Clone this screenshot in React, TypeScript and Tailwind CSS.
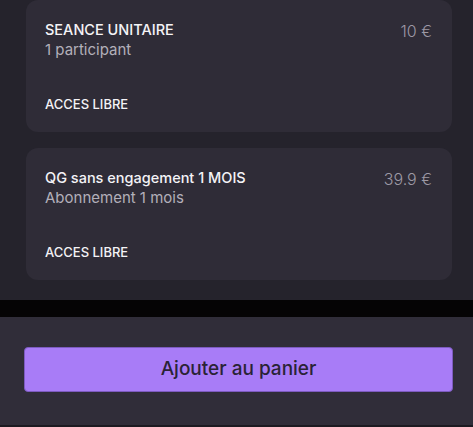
const offers = [
  { title: "SEANCE UNITAIRE", subtitle: "1 participant", price: "10 €", access: "ACCES LIBRE" },
  { title: "QG sans engagement 1 MOIS", subtitle: "Abonnement 1 mois", price: "39.9 €", access: "ACCES LIBRE" },
];

function OfferCard({ offer }: { offer: (typeof offers)[number] }) {
  return (
    <div className="rounded-xl bg-[#2f2c37] pl-[19px] pr-[20px] pt-[20px] pb-[18px]">
      <div className="flex items-start justify-between">
        <div>
          <div className="text-[14.5px] leading-[20px] font-medium text-[#f4f3f6]">{offer.title}</div>
          <div className="text-[15px] leading-[20px] text-[#b3b0ba]">{offer.subtitle}</div>
        </div>
        <div className="pt-[1px] text-[16px] leading-[20px] font-light text-[#9d99a5]">{offer.price}</div>
      </div>
      <div className="mt-[34px] text-[13px] leading-[20px] font-medium text-[#f4f3f6]">{offer.access}</div>
    </div>
  );
}

export default function App() {
  return (
    <div className="w-[473px] h-[427px] overflow-hidden bg-[#25232c] flex flex-col" style={{ fontFamily: "Inter, 'Noto Sans', sans-serif" }}>
      <div className="flex flex-col gap-[16px] pl-[26px] pr-[21px] h-[300px]">
        {offers.map((o) => (
          <OfferCard key={o.title} offer={o} />
        ))}
      </div>
      <div className="h-[17px] bg-[#050405]" />
      <div className="flex-1 bg-[#302d39] pl-[24px] pr-[20px] pt-[30px] border-b-2 border-[#1c1a21]">
        <button className="w-full h-[45px] rounded-[4px] bg-[#a87cf7] border border-[#7d5bc0] text-[19px] font-medium text-[#2a2335]">
          Ajouter au panier
        </button>
      </div>
    </div>
  );
}
